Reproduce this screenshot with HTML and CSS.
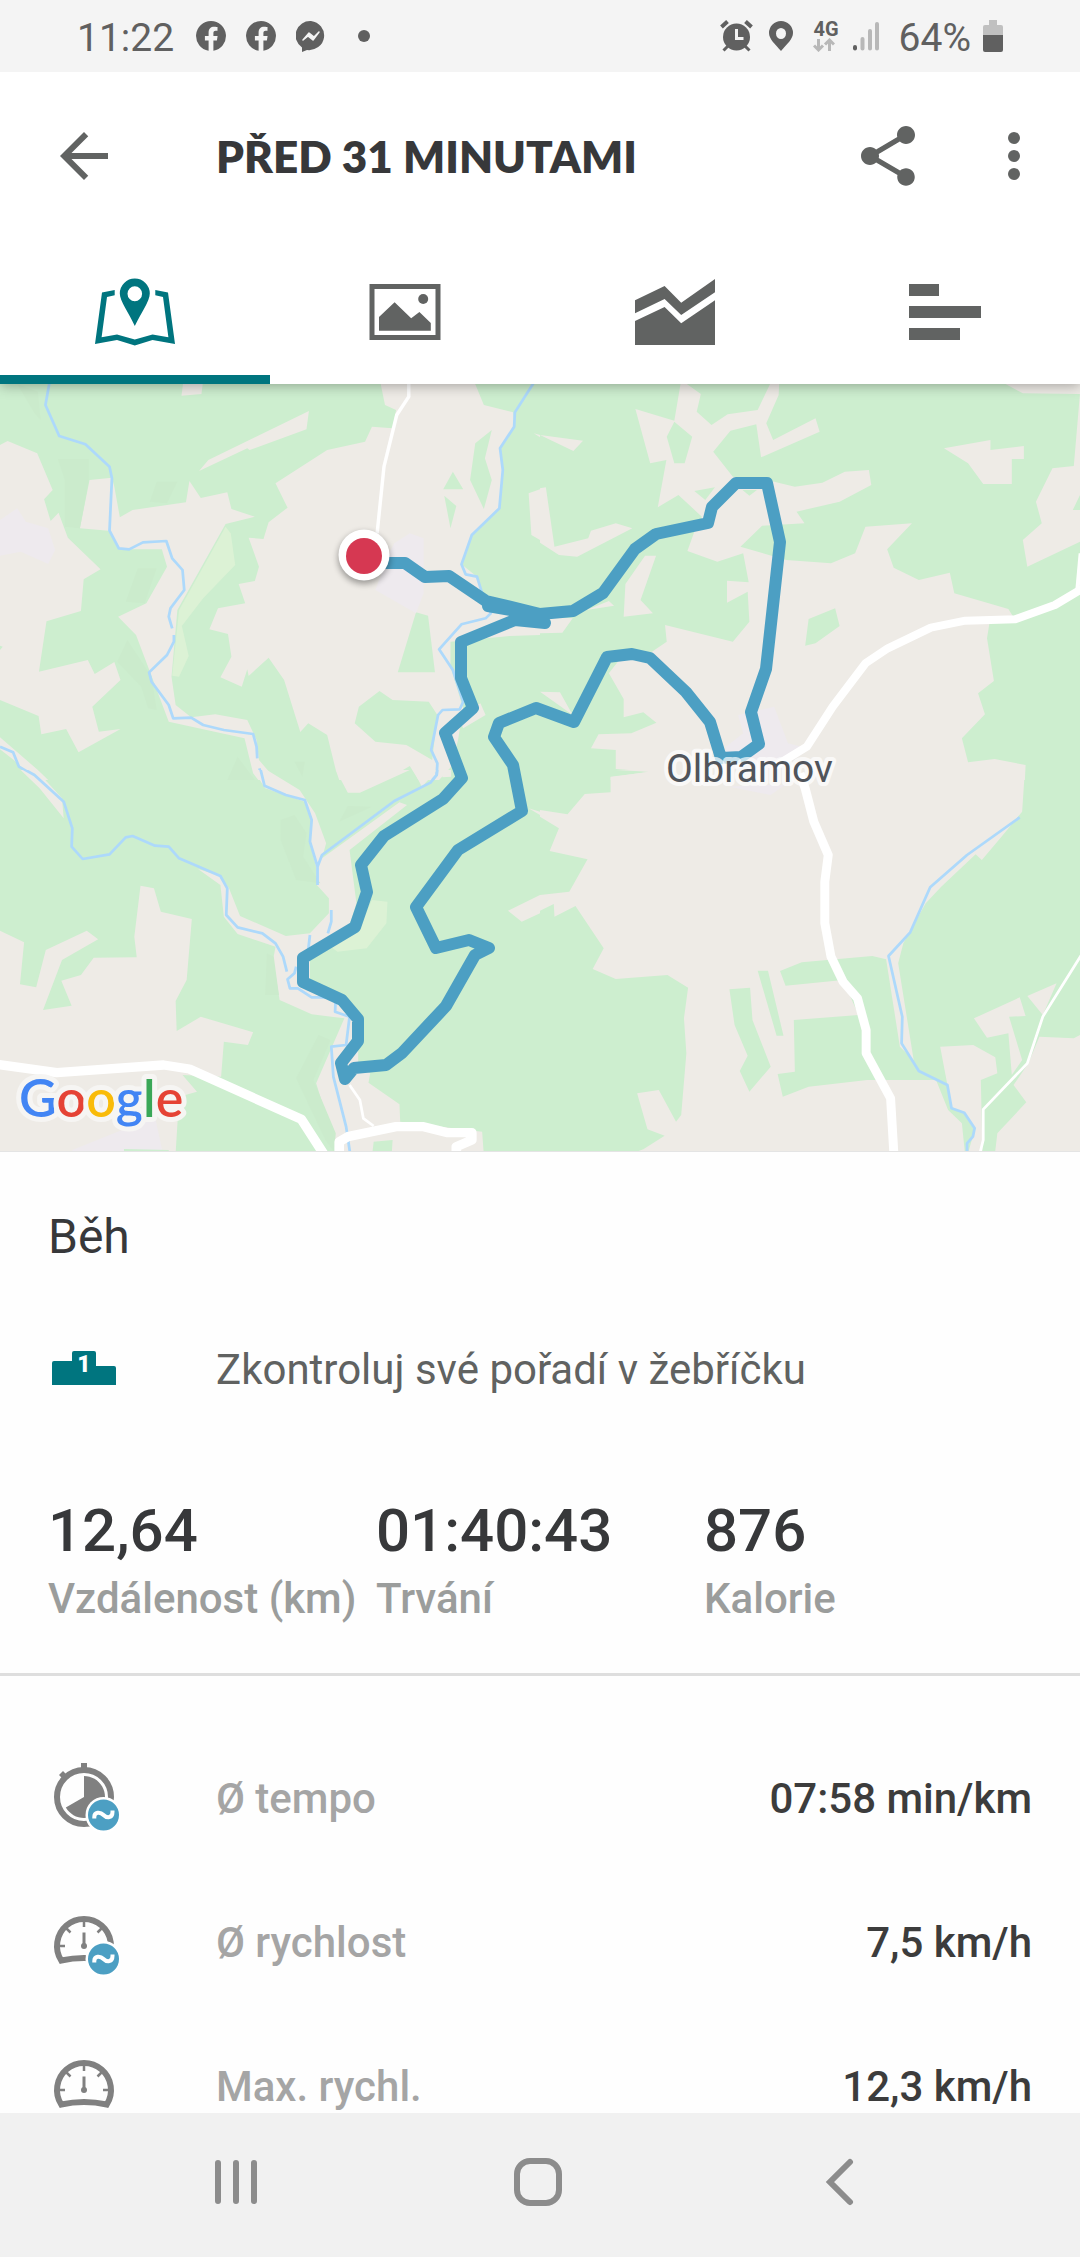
FILE: index.html
```html
<!DOCTYPE html>
<html lang="cs">
<head>
<meta charset="utf-8">
<meta name="viewport" content="width=device-width, initial-scale=1">
<title>Před 31 minutami</title>
<link rel="stylesheet" href="styles.css">
</head>
<body>
<svg class="defs" aria-hidden="true">
  <symbol id="facebook" viewBox="0 0 30 30">
    <path d="M15 0a15 15 0 0 0-2.4 29.8V19.5H8.9V15h3.7v-3.4c0-3.8 2.2-5.8 5.6-5.8 1.600 0 3.300.3 3.300.3v3.700h-1.900c-1.800 0-2.200 1.100-2.200 2.300V15h4.200l-.7 4.500h-3.500v10.300A15 15 0 0 0 15 0z"/>
  </symbol>
  <symbol id="average" viewBox="0 0 72 72">
    <circle cx="55.500" cy="53" r="18" fill="#fff"/>
    <circle cx="55.500" cy="53" r="15.500" fill="#4c9fc3"/>
    <path d="M46.300 56.500V55C46.300 50 52 49.500 55.500 53S64.500 56 64.500 50V48.500" fill="none" stroke="#fff" stroke-width="4"/>
  </symbol>
  <symbol id="gauge" viewBox="0 0 72 72">
    <g fill="none" stroke="#808080">
      <path d="M13.200 54.500A27 27 0 1 1 58.800 54.500Q36 49.500 13.200 54.500Z" stroke-width="6"/>
      <path d="M36 15v6M11 40h6M55 40h6M17.500 21.500l5 5M54.500 21.500l-5 5" stroke-width="2.500"/>
      <path d="M36 26.500V40" stroke-width="3"/>
    </g>
    <circle cx="36" cy="40" r="3" fill="#808080"/>
  </symbol>
</svg>

<header class="status">
  <div class="status-left">
    <span class="status-text">11:22</span>
    <svg class="app" width="30" height="30"><use href="#facebook"/></svg>
    <svg class="app" width="30" height="30"><use href="#facebook"/></svg>
    <svg class="app" width="30" height="32" viewBox="0 0 30 32">
      <path d="M15 1a15 14.500 0 1 1-4 29l-5 2v-4.500A14.500 14.500 0 0 1 15 1z"/>
      <path d="M7 20l6-7 5 4 5-5-6 8-5-4z" fill="#f4f4f4" stroke="#f4f4f4" stroke-width="1.500" stroke-linejoin="round"/>
    </svg>
    <svg class="more-apps" width="12" height="12"><circle cx="6" cy="6" r="6"/></svg>
  </div>
  <div class="status-right">
    <svg width="33" height="32" viewBox="0 0 33 32">
      <circle cx="16.500" cy="17" r="13.500"/>
      <path d="M1.500 7l6-5.500M31.500 7l-6-5.500" stroke="#606060" stroke-width="4"/>
      <path d="M3.500 30.500l5-5M29.500 30.500l-5-5" stroke="#606060" stroke-width="3"/>
      <path d="M16.500 9v9.500h7" fill="none" stroke="#f4f4f4" stroke-width="3"/>
    </svg>
    <svg class="pin" width="24" height="32" viewBox="0 0 24 32">
      <path fill-rule="evenodd" d="M12 1a12 12 0 0 1 12 12c0 6-6 11-12 18C6 24 0 19 0 13A12 12 0 0 1 12 1zm0 7a5 5.500 0 1 0 0 11 5 5.500 0 1 0 0-11z"/>
    </svg>
    <div class="network">
      <span>4G</span>
      <svg width="22" height="14" viewBox="0 0 22 14" fill="none" stroke="#b8b8b8" stroke-width="3">
        <path d="M5.500 1v11M1 7.500l4.500 4.500L10 7.500M16.500 13V2M12 6.500L16.500 2 21 6.500"/>
      </svg>
    </div>
    <svg class="signal" width="26" height="32" viewBox="0 0 26 32" stroke-width="4" stroke-linecap="round">
      <path d="M2 27v1.500" stroke="#606060"/>
      <path d="M9.500 19v9.500M17 11v17.500M24 4v24.500" stroke="#b8b8b8"/>
    </svg>
    <span class="status-text">64%</span>
    <svg class="battery" width="20" height="32" viewBox="0 0 20 32">
      <path d="M6 0h8v5h4a2 2 0 0 1 2 2v9H0V7a2 2 0 0 1 2-2h4z" fill="#c0c0c0"/>
      <path d="M0 15h20v15a2 2 0 0 1-2 2H2a2 2 0 0 1-2-2z"/>
    </svg>
  </div>
</header>

<div class="toolbar">
  <button class="icon-button" aria-label="Zpět">
    <svg width="72" height="72" viewBox="0 0 24 24"><path d="M20 11H7.830l5.590-5.590L12 4l-8 8 8 8 1.410-1.410L7.830 13H20z"/></svg>
  </button>
  <h1>PŘED 31 MINUTAMI</h1>
  <button class="icon-button" aria-label="Sdílet">
    <svg width="72" height="72" viewBox="0 0 24 24"><path d="M18 16.080c-.76 0-1.440.3-1.960.77L8.910 12.700c.05-.23.09-.46.09-.7s-.04-.47-.09-.7l7.050-4.110c.54.5 1.250.81 2.040.81 1.660 0 3-1.340 3-3s-1.340-3-3-3-3 1.340-3 3c0 .24.04.47.09.7L8.040 9.810C7.500 9.310 6.790 9 6 9c-1.660 0-3 1.340-3 3s1.340 3 3 3c.79 0 1.500-.31 2.040-.81l7.120 4.160c-.05.21-.08.43-.08.65 0 1.610 1.310 2.920 2.920 2.920s2.920-1.310 2.920-2.920-1.310-2.920-2.920-2.920z"/></svg>
  </button>
  <button class="icon-button menu" aria-label="Další možnosti">
    <svg width="72" height="72" viewBox="0 0 24 24"><circle cx="12" cy="6" r="2"/><circle cx="12" cy="12" r="2"/><circle cx="12" cy="18" r="2"/></svg>
  </button>
</div>

<nav class="tabs">
  <button class="tab active" aria-label="Mapa">
    <svg width="80" height="80" viewBox="0 0 80 80">
      <path d="M19.700 18L7 20.600 0 72l22-4 17.800 5.500L57.500 68 80 72 73 20.600 60.300 18v5.300L68 25l5.400 40.300-15.900-2.700-17.700 5L22 62.600 6.600 65.300 12 25l7.700-1.700z"/>
      <path fill-rule="evenodd" d="M39.800 6.500A15 15 0 0 1 54.800 21.500C54.800 29 46 41 39.800 54 34 41 24.800 29 24.800 21.500A15 15 0 0 1 39.800 6.500zm0 7.700a7.300 7.500 0 1 0 0 15 7.300 7.500 0 1 0 0-15z"/>
    </svg>
  </button>
  <button class="tab" aria-label="Fotografie">
    <svg width="80" height="80" viewBox="0 0 80 80">
      <path d="M7 14.500h66v51H7z" fill="none" stroke="#616362" stroke-width="5"/>
      <path d="M14 45l15.600-14.700 16.600 16 8.200-6.300 11.400 11v7.700H14z"/><circle cx="58.200" cy="27" r="5"/>
    </svg>
  </button>
  <button class="tab" aria-label="Grafy">
    <svg width="80" height="80" viewBox="0 0 80 80">
      <path d="M0 28.300L29.600 14l16.600 16.700L80 7v13.300L46.200 43 29.600 27 0 41.300zM0 49l29.600-14 16.600 16.300L80 28.300V73H0z"/>
    </svg>
  </button>
  <button class="tab" aria-label="Mezičasy">
    <svg width="80" height="80" viewBox="0 0 80 80"><path d="M4 12h30v12H4zM4 34h72v12H4zM4 56h51v12H4z"/></svg>
  </button>
</nav>

<main>
  <section class="map" aria-label="Mapa trasy">
    <svg viewBox="0 0 1080 767" role="img" aria-label="Trasa běhu u obce Olbramov">
      <rect width="1080" height="768" class="forest"/>

      <!-- north-west tile -->
      <svg x="0" y="-4" width="540" height="400" viewBox="0 0 1568 1200" preserveAspectRatio="none">
        <g class="open">
          <path d="M533 0H590L585 42 527 47Z"/>
          <path d="M605 240L897 93 890 148 725 210 718 205 578 273Z"/>
          <path d="M0 195L22 183 108 220 153 330 128 358 147 423 170 398 197 473 292 568 243 598 235 693 135 724 113 875 255 840 275 882 332 846 350 900 268 980 287 1055 350 1047 228 1117 192 1047 120 1063 112 1008 0 960Z"/>
          <path d="M260 300L325 293 332 320 348 412 385 390 540 367 550 303 583 354 660 337 672 387 740 410 655 432 515 690 498 890 510 975 555 1012 625 1003 718 1020 745 1080 752 1140 785 1180 800 1200H750L735 1180 710 1075 490 1025 437 880 395 765 343 710 425 670 485 560 470 508 345 508 315 452 232 445Z"/>
          <path d="M1103 0L1118 75 1150 90 1140 145 1080 140 1060 185 950 210 800 310 835 383 780 427 765 477 722 473 752 560 740 603 693 612 712 670 633 685 608 748 662 762 672 830 640 892 702 920 718 868 722 888 780 833 825 900 872 1056 895 1030 950 1065 975 1170 985 1200H1120L1190 1158 1215 1200H1275L1310 1160 1330 1080 1345 985 1308 860V785L1480 768 1568 765V700L1400 640 1385 590 1340 553 1370 465 1450 385 1460 270 1452 205 1495 140 1490 97 1405 75 1375 0Z"/>
          <path d="M1535 340L1568 328V480L1543 465ZM1550 160L1568 165V172ZM1395 970L1410 1005 1345 1045 1330 1010ZM0 1072L110 1170 140 1200H100L40 1140 0 1108Z"/>
        </g>
        <g class="forest">
          <path d="M1380 190L1428 150 1408 235 1428 300 1405 387 1365 300ZM1315 275L1345 328H1287ZM1290 347L1325 378 1308 445ZM1208 697L1243 707 1263 877H1155ZM1090 1085L1030 1030 1042 980 1102 933 1140 960 1245 965 1270 1005 1255 1140 1180 1095ZM0 797L8 800 0 810Z"/>
        </g>
        <path class="town" d="M0 420L50 385 75 425 140 445 160 510 140 552 60 515 0 527ZM1145 490L1190 460 1230 475V640L1208 700 1090 630 1130 520Z"/>
        <path class="meadow" d="M655 440L670 460 683 555 590 655 528 738 548 828 520 890 500 887 520 690Z"/>
        <path class="wood" d="M168 237H258V300L232 445 188 440V300ZM455 305H515L485 370 435 365ZM400 565H455L420 670 365 665ZM370 780L440 890 455 990 430 985 410 920 340 845ZM50 12L110 35 118 120 100 100ZM690 1130L740 1200H660ZM855 1145H885L878 1190Z"/>
        <g class="river">
          <path d="M145 0L132 75 172 168 248 193 318 260 325 295 318 452 345 505 375 508 415 487 483 483 500 535 530 570 535 630 495 685 490 710 500 745M505 765V785L485 825 433 877 440 905 490 975 503 1015 555 1013 590 1035 650 1050 735 1062 745 1100 747 1135M753 1165L765 1200M0 1100L38 1117 55 1160 120 1200"/>
          <path d="M1555 0L1495 97 1493 140 1452 205 1460 270 1450 385 1370 465 1340 553 1352 583 1385 590 1400 640 1425 700 1410 715 1340 733 1275 808 1315 870 1345 965 1335 988 1285 990 1272 1005 1252 1110 1270 1150 1268 1185 1255 1200"/>
        </g>
        <path class="road" stroke-width="10" d="M1187 0V50L1152 105 1115 260 1095 460"/>
      </svg>

      <!-- north-east tile -->
      <svg x="540" y="-4" width="540" height="400" viewBox="0 0 1568 1200" preserveAspectRatio="none">
        <g class="open">
          <path d="M410 0L467 42 455 95 498 135 545 103 632 90 668 12V0H695L693 45 657 130 677 180 800 115 812 155 642 232 628 133 553 152 503 215 560 290 680 305 740 320 820 308 885 275 955 270 962 315 870 365 745 395 768 430 645 437 582 500 715 540 845 550 915 520 945 440 1080 430 1008 508 1027 563 1100 600 1190 578 1203 640 1360 687 1380 720 1305 730 1298 775 1318 903 1272 940 1292 1003 1225 1075 1243 1147 1320 1137 1410 1155 1408 1200H205V1190L325 1175 220 1167V1110L148 1105 170 1063 265 1060 338 1028 300 997 243 1012V957L200 880 230 840 325 815 368 785 363 735 560 785 608 725 603 635 543 668V602L606 607 590 520 515 545 428 513 450 450 470 410 402 345 342 382 367 240 320 250 277 87 390 122Z"/>
          <path d="M0 165L125 182 97 213ZM0 325L17 322 42 500 140 475 148 452 220 430 268 445 108 530 55 525 0 488ZM305 527H337L292 660 328 700 243 710 248 612ZM0 710L95 715 65 758 0 760ZM135 690L200 663 215 677ZM0 935L58 937 95 1005Z"/>
          <path d="M1173 205L1308 180V210L1405 198V237H1370V312H1287L1243 250ZM1330 0H1568V42L1402 40ZM1568 40L1550 258 1488 265 1440 365 1457 430 1402 480 1415 560 1568 485Z"/>
        </g>
        <path class="forest" d="M390 125L442 170 420 250H390L368 170ZM448 333L508 322 480 360ZM780 717L857 685 870 738 800 790 770 797ZM588 330L608 347 630 330ZM1568 345L1547 390H1568Z"/>
        <path class="town" d="M575 1005L680 980 720 1090 760 1100 700 1170H540V1100L590 1060Z"/>
        <path class="road" stroke-width="24" d="M680 1160L775 1100 850 980 945 850 1010 805 1135 743 1235 722 1380 718 1495 675 1600 610"/>
        <path class="road" stroke-width="12" d="M1560 635L1570 520"/>
      </svg>

      <!-- south-west tile -->
      <svg x="0" y="386" width="540" height="400" viewBox="0 0 1568 1200" preserveAspectRatio="none">
        <g class="open">
          <path d="M735 0H775L870 60 915 130 947 220 935 265 1160 97 1182 105 1015 240 1035 400 1010 480 900 570V640L1010 700 1040 760V890L1075 910 1070 938 1160 1003 1162 1055 1400 1085 1408 1200H990L980 1145 918 940 1000 745 905 733 812 690 793 570 800 530 690 492 650 440 640 345 575 297 640 318 665 355 697 438 830 498 900 490 955 430V385L920 345 918 290 900 220 905 150 885 95 770 55Z"/>
          <path d="M975 0L1010 68H1045L1190 0ZM1200 0L1225 50 1270 0ZM60 0H105L180 85 185 145 115 55ZM1280 0L1285 22 1310 20V0Z"/>
          <path d="M0 482L70 517 58 643 105 652 133 540 252 482 285 508 180 570 125 720 208 707 178 632 235 615 272 563 397 562 390 500 408 347 447 355 467 425 557 447 542 630 510 693 513 783 583 740 735 787 720 825 650 815 642 920 530 915 572 965 520 980 507 1200H0Z"/>
          <path d="M1475 422L1568 375V430L1515 455ZM1535 115L1568 125V135Z"/>
        </g>
        <path class="town" d="M210 1140L450 1040 475 1160H210Z"/>
        <path class="forest" d="M1085 1115L1140 1110 1137 1160H1080ZM360 1137L490 1140V1160H360Z"/>
        <path class="meadow" d="M1080 390L1125 395 1122 460 1065 535 980 545 960 530 1050 460Z"/>
        <path class="wood" d="M855 135L890 190 880 260 930 340 860 330 815 210V150ZM1010 108L1080 110 985 155ZM925 795L960 810 910 930 975 1090 970 1145 945 1110 860 925ZM775 550L795 560 810 675H770Z"/>
        <g class="river">
          <path d="M60 -8L100 15 185 95 210 175 208 230 240 267 318 253 365 202 385 198 450 227 490 230 520 265 640 318 660 355 657 435 690 472 762 490 800 520 822 560 833 605"/>
          <path d="M1270 -8L1268 15 1250 38 1145 93 935 255 922 290V345M755 -8L768 47 830 75 885 90 905 150 900 215 922 290M962 420V455L952 490M900 495L895 540M860 590L855 610 835 628 842 655H865L905 682H975L973 725 1015 740 1005 825 962 830 968 920 1005 1070 1018 1160"/>
        </g>
        <path class="road" stroke-width="28" d="M-10 883L165 908 475 885 550 897 875 1048 945 1160M985 1160V1115L1010 1100 1150 1070H1230L1300 1088H1370V1110L1325 1130V1160"/>
        <path class="road" stroke-width="8" d="M1015 945L1045 990 1055 1045 1085 1068"/>
      </svg>

      <!-- south-east tile -->
      <svg x="540" y="386" width="540" height="400" viewBox="0 0 1568 1200" preserveAspectRatio="none">
        <g class="open">
          <path d="M220 0L315 5 205 22V67L130 72 80 133 0 120V140L55 175 28 243 138 268 85 365 0 375V422L40 402 42 440 103 408 185 535 153 597 220 627 370 615 430 653 418 745 425 850 410 1035 395 1055 345 960 282 970 312 1078 362 1097 300 1138 240 1160H1235L1225 1060 1185 1020 1150 930H950L780 950 705 980 690 912 740 905 737 750 925 735 880 630 713 647 697 603 760 577 965 558 1005 568 1045 830 1085 870 1040 580 1055 520 1120 400 1165 350 1265 253 1283 270 1340 200 1400 125 1408 0Z"/>
          <path d="M1162 830L1258 825 1322 862 1328 910 1280 930 1285 1160H1240L1262 1080 1230 1030 1195 1010 1183 945ZM1260 745L1393 682 1410 738 1362 740 1400 870 1370 915 1360 790 1298 803ZM1415 678L1500 640 1460 735ZM1450 800L1550 805 1568 795V1160H1320L1328 1090 1412 997 1375 945 1418 880Z"/>
        </g>
        <path class="forest" d="M550 658L610 653 617 750 670 890 608 965 580 903 603 857 565 765ZM632 602H662L707 797H687Z"/>
        <path class="town" d="M550 50L620 45H710L670 75Z"/>
        <path class="river" stroke-width="9" d="M1393 142L1240 255 1133 352 1075 487 1012 558 1052 740 1050 820 1100 903 1183 945 1195 1015 1232 1028 1262 1075 1257 1100 1240 1120V1160"/>
        <path class="road" stroke-width="26" d="M755 10L770 55 795 155 837 255 827 335V460L845 560 880 635 922 685 947 780V850L1018 985 1028 1160"/>
        <path class="road" stroke-width="8" d="M1575 550L1460 740 1415 880 1287 1018V1110L1275 1160"/>
      </svg>

      <path class="route" d="M364 179H405L425 193 449 192 486 217 540 230 573 227 603 209 635 165 656 150 708 139 712 123 736 99H767L780 158 766 285 751 328 759 360 741 373 721 374 710 338 686 308 650 274 632 270 607 273 574 338 536 324 499 339 494 353 513 381 522 427 458 466 416 523 436 564 469 556 489 564 475 571 446 622 402 669 386 681 354 684 345 695 341 679 358 657V635L342 616 303 598V574L355 543 367 508 361 481 384 452 443 415 462 394 445 349 473 324 461 294V258L515 236 545 239 540 231 488 222"/>
      <circle cx="364" cy="174" r="26" class="pin-shadow"/>
      <circle cx="364" cy="171" r="25.500" fill="#fff"/>
      <circle cx="364" cy="172" r="18" fill="#d63852"/>

      <text class="place" x="666" y="398">Olbramov</text>
      <text class="logo" x="19" y="733"><tspan fill="#4285f4">G</tspan><tspan fill="#e54335">o</tspan><tspan fill="#f9bb09">o</tspan><tspan fill="#4285f4">g</tspan><tspan fill="#3aa757">l</tspan><tspan fill="#e54335">e</tspan></text>
    </svg>
  </section>

  <section class="summary">
    <h2>Běh</h2>
    <a class="ranking" href="#zebricek">
      <svg class="row-icon" width="72" height="72" viewBox="0 0 72 72">
        <path d="M4 52V30a2 2 0 0 1 2-2h18v-8a2 2 0 0 1 2-2h20a2 2 0 0 1 2 2v13h18a2 2 0 0 1 2 2v17z" fill="#00757f"/>
        <text x="36" y="39" class="podium-number">1</text>
      </svg>
      <span>Zkontroluj své pořadí v žebříčku</span>
    </a>
    <dl class="stats">
      <div><dd>12,64</dd><dt>Vzdálenost (km)</dt></div>
      <div><dd>01:40:43</dd><dt>Trvání</dt></div>
      <div><dd>876</dd><dt>Kalorie</dt></div>
    </dl>
  </section>

  <dl class="details">
    <div class="detail">
      <dt>
        <svg class="row-icon" width="72" height="72" viewBox="0 0 72 72">
          <circle cx="36" cy="35" r="27" fill="none" stroke="#808080" stroke-width="6"/>
          <path d="M33 1h6v7h-6zM11 13l4-4 3 3-4 4z" fill="#808080"/>
          <path d="M36 35V14A21 21 0 1 1 17.800 45.500Z" fill="#808080"/>
          <use href="#average"/>
        </svg>
        Ø tempo
      </dt>
      <dd>07:58 min/km</dd>
    </div>
    <div class="detail">
      <dt>
        <svg class="row-icon" width="72" height="72" viewBox="0 0 72 72"><use href="#gauge"/><use href="#average"/></svg>
        Ø rychlost
      </dt>
      <dd>7,5 km/h</dd>
    </div>
    <div class="detail">
      <dt>
        <svg class="row-icon" width="72" height="72" viewBox="0 0 72 72"><use href="#gauge"/></svg>
        Max. rychl.
      </dt>
      <dd>12,3 km/h</dd>
    </div>
  </dl>
</main>

<nav class="system-nav">
  <button aria-label="Poslední aplikace">
    <svg width="48" height="48" viewBox="0 0 48 48"><path d="M6 5v38M24 5v38M42 5v38"/></svg>
  </button>
  <button aria-label="Domů">
    <svg width="48" height="48" viewBox="0 0 48 48"><rect x="3" y="3" width="42" height="42" rx="13"/></svg>
  </button>
  <button aria-label="Zpět">
    <svg width="48" height="48" viewBox="0 0 48 48"><path d="M34 4L14 24l20 20"/></svg>
  </button>
</nav>
</body>
</html>
```

FILE: styles.css
```css
* {
  box-sizing: border-box;
}

body {
  margin: 0;
  height: 100vh;
  display: flex;
  flex-direction: column;
  background: #fefefe;
  color: #37383a;
  font-family: Roboto, "Liberation Sans", sans-serif;
  font-size: 42px;
}

h1, h2, dl, dt, dd {
  margin: 0;
}

svg {
  display: block;
  flex: none;
}

button {
  display: flex;
  align-items: center;
  justify-content: center;
  padding: 0;
  border: 0;
  background: none;
}

.defs {
  position: absolute;
  width: 0;
  height: 0;
}

/* Status bar */
.status {
  flex: none;
  display: flex;
  justify-content: space-between;
  height: 72px;
  padding: 0 77px;
  background: #f4f4f4;
  color: #606060;
  fill: #606060;
}

.status-left,
.status-right {
  display: flex;
  align-items: center;
}

.status-left {
  gap: 20px;
}

.status-text {
  font-size: 39px;
  line-height: 48px;
  padding: 4px 2px 0 0;
}

.more-apps {
  margin-left: 12px;
}

.pin {
  margin-left: 16px;
}

.network {
  margin-left: 20px;
  font-size: 20px;
  line-height: 18px;
  font-weight: 700;
}

.signal {
  margin: 0 20px 0 14px;
}

.battery {
  margin-left: 10px;
}

/* Toolbar */
.toolbar {
  flex: none;
  display: flex;
  align-items: center;
  height: 168px;
  padding: 0 30px 0 48px;
  background: #fff;
  fill: #616362;
  z-index: 2;
}

.toolbar h1 {
  flex: 1;
  margin-left: 96px;
  font-family: Lato, Roboto, sans-serif;
  font-size: 44px;
  line-height: 60px;
  font-weight: 800;
  white-space: nowrap;
}

.menu {
  margin-left: 54px;
}

/* Tabs */
.tabs {
  flex: none;
  display: grid;
  grid-template-columns: repeat(4, 1fr);
  height: 144px;
  background: #fff;
  fill: #616362;
  box-shadow: 0 2px 12px rgba(0, 0, 0, 0.3);
  z-index: 1;
}

.tab {
  border-top: 9px solid transparent;
  border-bottom: 9px solid transparent;
}

.tab.active {
  border-bottom-color: #00757f;
  fill: #00757f;
}

/* Scrolling content */
main {
  flex: 1;
  min-height: 0;
  overflow-y: auto;
  scrollbar-width: none;
}

.map {
  border-bottom: 1px solid #e4e4e4;
}

.map > svg {
  width: 100%;
  height: auto;
}

.forest { fill: #cdeecf; }
.open { fill: #eeebe6; }
.town { fill: #eeeaee; }
.meadow { fill: #dcf2d5; }
.wood { fill: #cbebcc; }

.river {
  fill: none;
  stroke: #add9fb;
  stroke-width: 8px;
  stroke-linejoin: round;
}

.road {
  fill: none;
  stroke: #fff;
  stroke-linejoin: round;
}

.route {
  fill: none;
  stroke: #4c9fc3;
  stroke-width: 12px;
  stroke-linejoin: round;
  stroke-linecap: round;
}

.pin-shadow {
  fill: #000;
  opacity: 0.35;
  filter: blur(3px);
}

.place {
  font-size: 39px;
  fill: #50545b;
  stroke: rgba(255, 255, 255, 0.7);
  stroke-width: 8px;
  stroke-linejoin: round;
  paint-order: stroke;
}

.logo {
  font-family: Lato, sans-serif;
  font-size: 52px;
  font-weight: 600;
  stroke: #f6f5f3;
  stroke-width: 10px;
  stroke-linejoin: round;
  paint-order: stroke;
}

/* Summary */
.summary {
  padding: 49px 48px 42px;
  border-bottom: 3px solid #dedede;
}

.summary h2 {
  font-size: 48px;
  line-height: 72px;
  font-weight: 400;
}

.ranking {
  display: flex;
  align-items: center;
  height: 144px;
  margin: 24px 0 54px;
  color: #606261;
  text-decoration: none;
}

.row-icon {
  margin-right: 96px;
}

.podium-number {
  fill: #fff;
  font-size: 23px;
  font-weight: 900;
  text-anchor: middle;
}

.stats {
  display: grid;
  grid-template-columns: repeat(3, 1fr);
  font-weight: 500;
  white-space: nowrap;
}

.stats dd {
  font-size: 60px;
  line-height: 72px;
}

.stats dt {
  line-height: 64px;
  color: #9b9d9c;
}

/* Details */
.details {
  padding: 50px 48px 0;
  font-weight: 500;
}

.detail,
.detail dt {
  display: flex;
  align-items: center;
}

.detail {
  justify-content: space-between;
  height: 144px;
}

.detail dt {
  color: #a5a5a5;
}

.detail dd {
  color: #3c3c3c;
}

/* System navigation */
.system-nav {
  flex: none;
  display: grid;
  grid-template-columns: repeat(3, 1fr);
  height: 144px;
  padding: 0 89px 6px 85px;
  background: #f1f1f1;
}

.system-nav svg {
  fill: none;
  stroke: #8c8c8c;
  stroke-width: 6px;
  stroke-linecap: round;
}
```
